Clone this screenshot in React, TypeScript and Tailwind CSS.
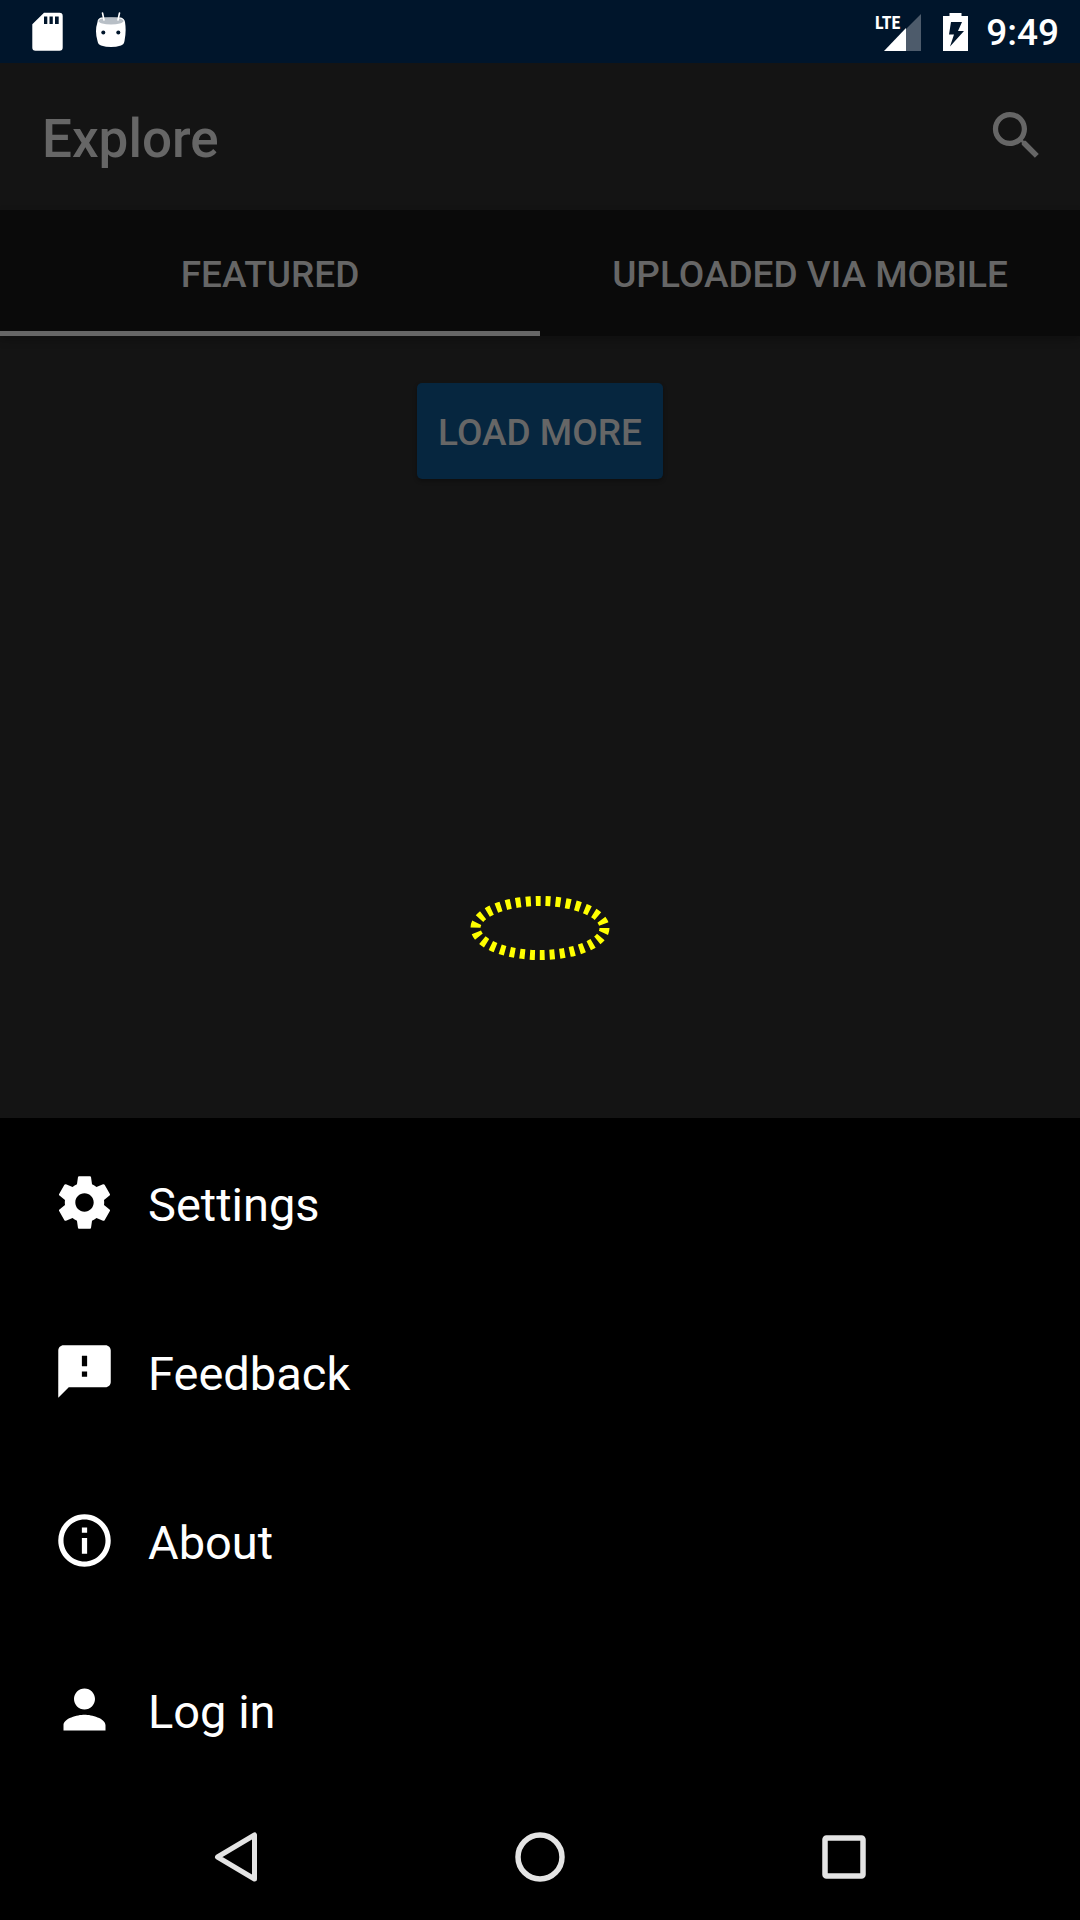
import type { ReactNode } from "react";

function Icon({ path }: { path: string }) {
  return (
    <svg viewBox="0 0 24 24" className="size-[63px] shrink-0 fill-current" aria-hidden="true">
      <path d={path} />
    </svg>
  );
}

const SEARCH =
  "M15.5 14h-.79l-.28-.27C15.41 12.59 16 11.11 16 9.5 16 5.91 13.09 3 9.5 3S3 5.91 3 9.5 5.91 16 9.5 16c1.61 0 3.09-.59 4.23-1.57l.27.28v.79l5 4.99L20.49 19l-4.99-5zm-6 0C7.01 14 5 11.99 5 9.5S7.01 5 9.5 5 14 7.01 14 9.5 11.99 14 9.5 14z";

const menu = [
  {
    label: "Settings",
    path: "M19.43 12.98c.04-.32.07-.64.07-.98s-.03-.66-.07-.98l2.11-1.65c.19-.15.24-.42.12-.64l-2-3.46c-.12-.22-.39-.3-.61-.22l-2.49 1c-.52-.4-1.08-.73-1.69-.98l-.38-2.65C14.46 2.18 14.25 2 14 2h-4c-.25 0-.46.18-.49.42l-.38 2.65c-.61.25-1.17.59-1.69.98l-2.49-1c-.23-.09-.49 0-.61.22l-2 3.46c-.13.22-.07.49.12.64l2.11 1.65c-.04.32-.07.65-.07.98s.03.66.07.98l-2.11 1.65c-.19.15-.24.42-.12.64l2 3.46c.12.22.39.3.61.22l2.49-1c.52.4 1.08.73 1.69.98l.38 2.65c.03.24.24.42.49.42h4c.25 0 .46-.18.49-.42l.38-2.65c.61-.25 1.17-.59 1.69-.98l2.49 1c.23.09.49 0 .61-.22l2-3.46c.12-.22.07-.49-.12-.64l-2.11-1.65zM12 15.5c-1.93 0-3.5-1.57-3.5-3.5s1.57-3.5 3.5-3.5 3.5 1.57 3.5 3.5-1.57 3.5-3.5 3.5z",
  },
  {
    label: "Feedback",
    path: "M20 2H4c-1.1 0-1.99.9-1.99 2L2 22l4-4h14c1.1 0 2-.9 2-2V4c0-1.1-.9-2-2-2zm-7 12h-2v-2h2v2zm0-4h-2V6h2v4z",
  },
  {
    label: "About",
    path: "M11 17h2v-6h-2v6zm1-15C6.48 2 2 6.48 2 12s4.48 10 10 10 10-4.48 10-10S17.52 2 12 2zm0 18c-4.41 0-8-3.59-8-8s3.59-8 8-8 8 3.59 8 8-3.59 8-8 8zM11 9h2V7h-2v2z",
  },
  {
    label: "Log in",
    path: "M12 12c2.21 0 4-1.79 4-4s-1.79-4-4-4-4 1.79-4 4 1.79 4 4 4zm0 2c-2.67 0-8 1.34-8 4v2h16v-2c0-2.66-5.33-4-8-4z",
  },
];

function StatusBar() {
  return (
    <div className="flex h-[63px] items-center justify-between bg-[#00152b] pl-8 pr-[21px] text-white">
      <div className="flex items-center gap-8">
        <svg viewBox="0 0 31 39" className="h-[39px] w-[31px]" aria-hidden="true">
          <path
            fill="#fff"
            fillRule="evenodd"
            d="M12 .7H27.500Q30.700 .7 30.700 4V35.500Q30.700 38.700 27.500 38.700H3.500Q.3 38.700 .3 35.500V12.300ZM12 4.500V12H15.300V4.500ZM17.500 4.500V12H20.800V4.500ZM23 4.500V12H26.700V4.500Z"
          />
        </svg>
        <svg viewBox="0 0 32 38" className="mb-1 h-[38px] w-8" aria-hidden="true">
          <path
            fill="#fff"
            d="M2.500 11Q2.500 7.500 6 6.500H26Q29.500 7.500 30 11Q31.500 20 29.500 30Q29 33.500 26 34.500Q16 37.500 6 34.500Q3 33.500 2.500 30Q-.5 20 2.500 11Z"
          />
          <ellipse cx="16" cy="10" rx="12.500" ry="3.500" fill="#b8bfc6" />
          <path d="M7.500 2 9 9M24.500 2 23 9" stroke="#fff" strokeWidth="1.600" strokeLinecap="round" />
          <circle cx="8.300" cy="21.500" r="2" fill="#00152b" />
          <circle cx="23.300" cy="21.500" r="2" fill="#00152b" />
        </svg>
      </div>
      <div className="flex items-center">
        <svg viewBox="0 0 46 38" className="h-[38px] w-[46px]" role="img" aria-label="LTE signal">
          <path d="M46 1V38H31V16Z" fill="#4d5b6b" />
          <path d="M31 15V38H9Z" fill="#fff" />
          <text x="0" y="16" fill="#fff" className="font-['Roboto_Condensed','Liberation_Sans_Narrow','Roboto',sans-serif] text-[18px] font-bold">
            LTE
          </text>
        </svg>
        <svg viewBox="0 0 25 38" className="ml-[22px] h-[38px] w-[25px]" aria-hidden="true">
          <path
            fill="#fff"
            fillRule="evenodd"
            d="M6.500 0H18.500V3H25V38H0V3H6.500ZM8 9 6 21.500H11L7 33.500 21 18H15L19 9Z"
          />
        </svg>
        <span className="ml-[18px] pt-0.5 text-[37px] leading-none font-medium">9:49</span>
      </div>
    </div>
  );
}

function Tab({ children, selected = false }: { children: ReactNode; selected?: boolean }) {
  return (
    <button
      type="button"
      role="tab"
      aria-selected={selected}
      className={
        selected
          ? "relative flex h-[126px] items-center justify-center pt-0.5 text-[37px] leading-none font-medium after:absolute after:inset-x-0 after:bottom-0 after:h-[5px] after:bg-[#666666]"
          : "relative flex h-[126px] items-center justify-center pt-0.5 text-[37px] leading-none font-medium"
      }
    >
      {children}
    </button>
  );
}

export default function App() {
  return (
    <div className="flex min-h-screen flex-col bg-[#141414] font-['Roboto',sans-serif] text-[#666666]">
      <StatusBar />
      <header className="flex h-[147px] items-center justify-between pr-8 pb-0.5 pl-[42px]">
        <h1 className="pt-2 text-[53px] leading-none font-medium">Explore</h1>
        <button type="button" aria-label="Search">
          <Icon path={SEARCH} />
        </button>
      </header>
      <div role="tablist" className="grid grid-cols-2 bg-[#0a0a0a] shadow-[0_4px_8px_rgba(0,0,0,0.25)]">
        <Tab selected>FEATURED</Tab>
        <Tab>UPLOADED VIA MOBILE</Tab>
      </div>
      <main className="relative flex flex-1 flex-col items-center pt-[47px]">
        <button
          type="button"
          className="h-24 rounded-[5px] bg-[#06263f] px-[21px] pt-0.5 text-[37px] leading-none font-medium shadow-[0_2px_4px_rgba(0,0,0,0.3)]"
        >
          LOAD MORE
        </button>
        <svg
          viewBox="0 0 140 64"
          className="absolute bottom-[158px] left-1/2 h-16 w-[140px] -translate-x-1/2"
          aria-hidden="true"
        >
          <ellipse cx="70" cy="32" rx="64.500" ry="27" fill="none" stroke="#ffff00" strokeWidth="10" strokeDasharray="5 5" />
        </svg>
      </main>
      <nav className="flex flex-col bg-black text-white" aria-label="More">
        {menu.map((item) => (
          <button key={item.label} type="button" className="flex h-[169px] items-center gap-8 px-[53px] text-left">
            <Icon path={item.path} />
            <span className="pt-1 text-[47px] leading-none">{item.label}</span>
          </button>
        ))}
      </nav>
      <div className="grid h-[126px] grid-cols-3 items-center bg-black px-[84px] text-[#e4e4e4]">
        <button type="button" aria-label="Back" className="flex justify-center">
          <svg viewBox="0 0 50 50" className="size-[50px]" fill="none" stroke="currentColor" strokeWidth="5" strokeLinejoin="round">
            <path d="M43.500 3V47L6.500 25Z" />
          </svg>
        </button>
        <button type="button" aria-label="Home" className="flex justify-center">
          <svg viewBox="0 0 50 50" className="size-[50px]" fill="none" stroke="currentColor" strokeWidth="5.500">
            <circle cx="25" cy="25" r="22" />
          </svg>
        </button>
        <button type="button" aria-label="Recent apps" className="flex justify-center">
          <svg viewBox="0 0 50 50" className="size-[50px]" fill="none" stroke="currentColor" strokeWidth="5.500">
            <rect x="6" y="6" width="38" height="38" rx="1.500" />
          </svg>
        </button>
      </div>
    </div>
  );
}
